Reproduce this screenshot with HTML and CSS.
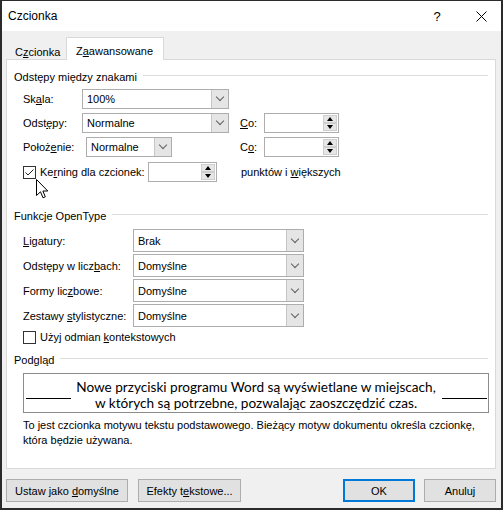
FILE: index.html
```html
<!DOCTYPE html>
<html lang="pl">
<head>
    <meta charset="UTF-8">
    <title>Czcionka</title>
    <link rel="stylesheet" href="styles.css">
</head>
<body>
    <div class="window">
        <div class="titlebar">
            <span class="title">Czcionka</span>
            <span class="help">?</span>
            <span class="close">
                <svg width="11" height="11" viewBox="0 0 11 11"><path d="M0.5 0.5 L10.5 10.5 M10.5 0.5 L0.5 10.5" stroke="#000" stroke-width="1"/></svg>
            </span>
        </div>
        <div class="tabs">
            <div class="tab">C<u>z</u>cionka</div>
            <div class="tab active">Z<u>a</u>awansowane</div>
        </div>
        <div class="panel">
            <div class="group-title">Odstępy między znakami</div>

            <div class="row r-skala">
                <span class="lbl w59">Sk<u>a</u>la:</span>
                <div class="combo w147"><span>100%</span><i class="arrow"></i></div>
            </div>
            <div class="row r-gap4">
                <span class="lbl w59">Odst<u>ę</u>py:</span>
                <div class="combo w147"><span>Normalne</span><i class="arrow"></i></div>
                <span class="lbl co"><u>C</u>o:</span>
                <div class="spin w75"><span class="val"></span><span class="btns"><i class="up"></i><i class="down"></i></span></div>
            </div>
            <div class="row r-gap4">
                <span class="lbl w63">Położ<u>e</u>nie:</span>
                <div class="combo w86"><span>Normalne</span><i class="arrow"></i></div>
                <span class="lbl co co-far">C<u>o</u>:</span>
                <div class="spin w75"><span class="val"></span><span class="btns"><i class="up"></i><i class="down"></i></span></div>
            </div>
            <div class="row r-kern">
                <span class="check on">
                    <svg width="11" height="11" viewBox="0 0 11 11"><path d="M1.5 5.5 L4 8 L9.5 2.5" fill="none" stroke="#222" stroke-width="1"/></svg>
                </span>
                <span class="lbl w108">Ke<u>r</u>ning dla czcionek:</span>
                <div class="spin w69"><span class="val"></span><span class="btns"><i class="up"></i><i class="down"></i></span></div>
                <span class="lbl after">punktów i <u>w</u>iększych</span>
            </div>

            <div class="group-title g2">Funkcje OpenType</div>

            <div class="row big first">
                <span class="lbl w110"><u>L</u>igatury:</span>
                <div class="combo w171"><span>Brak</span><i class="arrow"></i></div>
            </div>
            <div class="row big">
                <span class="lbl w110">Odstępy w licz<u>b</u>ach:</span>
                <div class="combo w171"><span>Domyślne</span><i class="arrow"></i></div>
            </div>
            <div class="row big">
                <span class="lbl w110">Formy lic<u>z</u>bowe:</span>
                <div class="combo w171"><span>Domyślne</span><i class="arrow"></i></div>
            </div>
            <div class="row big">
                <span class="lbl w110">Zestawy <u>s</u>tylistyczne:</span>
                <div class="combo w171"><span>Domyślne</span><i class="arrow"></i></div>
            </div>
            <div class="row r-ctx">
                <span class="check"></span>
                <span class="lbl">Użyj odmian <u>k</u>ontekstowych</span>
            </div>

            <div class="group-title g3">Podgląd</div>

            <div class="preview">
                <span class="rule"></span>
                <p class="sample">Nowe przyciski programu Word są wyświetlane w miejscach,<br>w których są potrzebne, pozwalając zaoszczędzić czas.</p>
                <span class="rule"></span>
            </div>
            <p class="desc">To jest czcionka motywu tekstu podstawowego. Bieżący motyw dokumentu określa czcionkę,<br>która będzie używana.</p>
        </div>
        <div class="footer">
            <button class="btn b-default">Ustaw jako <u>d</u>omyślne</button>
            <button class="btn b-effects">Efekty t<u>e</u>kstowe...</button>
            <button class="btn b-ok">OK</button>
            <button class="btn b-cancel">Anuluj</button>
        </div>

        <svg class="cursor" width="13" height="20" viewBox="0 0 13 20">
            <path d="M0.5 0.5 L0.5 16.5 L4.5 12.8 L7 18.8 L9.3 17.8 L6.9 12 L11.8 12 Z" fill="#fff" stroke="#000" stroke-width="1" stroke-linejoin="miter"/>
        </svg>
    </div>
</body>
</html>
```

FILE: styles.css
```css
*{margin: 0;padding: 0;box-sizing: border-box;}
html,body{
    width: 503px;
    height: 510px;
    background: #ffffff;
}
body{
    font-family: "Liberation Sans", Arial, sans-serif;
    font-size: 11px;
    color: #000000;
}
u{
    text-decoration: underline;
    text-underline-offset: 1px;
}

/* okno */
.window{
    position: relative;
    width: 503px;
    height: 510px;
    background: #f0f0f0;
    border: 2px solid #2b2b2b;
    border-top-width: 1px;
    display: flex;
    flex-direction: column;
}
.titlebar{
    height: 30px;
    background: #ffffff;
    display: flex;
    align-items: center;
    padding-left: 6px;
    font-size: 12px;
}
.title{
    flex-grow: 1;
}
.help{
    width: 30px;
    text-align: center;
    font-size: 13px;
    margin-right: 9px;
}
.close{
    width: 40px;
    display: flex;
    justify-content: center;
}

/* zakladki */
.tabs{
    height: 28px;
    display: flex;
    align-items: flex-end;
    padding-left: 4px;
}
.tab{
    height: 19px;
    width: 60px;
    padding: 4px 0 0 9px;
    line-height: 16px;
}
.tab.active{
    position: relative;
    z-index: 1;
    width: 98px;
    height: 23px;
    margin-bottom: -1px;
    padding: 5px 0 0 9px;
    background: #ffffff;
    border: 1px solid #d9d9d9;
    border-bottom: none;
}

/* panel */
.panel{
    margin-left: 4px;
    width: 490px;
    height: 410px;
    background: #ffffff;
    border: 1px solid #d9d9d9;
    padding: 9px 7px 0 7px;
}
.group-title{
    height: 16px;
    display: flex;
    align-items: center;
    line-height: 16px;
}
.group-title::after{
    content: "";
    flex-grow: 1;
    height: 1px;
    margin: 0 0 4px 6px;
    background: #dcdcdc;
}
.g2{margin-top: 26px;}
.g3{margin-top: 7px;}

.row{
    display: flex;
    align-items: center;
    height: 20px;
    margin-left: 9px;
}
.r-skala{margin-top: 4px;}
.r-gap4{margin-top: 4px;}
.r-kern{margin-top: 5px;}
.row.big{height: 23px;margin-top: 2px;}
.row.big.first{margin-top: 5px;}
.r-ctx{height: 16px;margin-top: 2px;}

.lbl{white-space: nowrap;}
.w59{width: 59px;}
.w63{width: 63px;}
.w108{width: 108px;}
.w110{width: 110px;}
.co{width: 24px;margin-left: 11px;}
.co-far{margin-left: 68px;}
.after{margin-left: 24px;}
.r-ctx .lbl{margin-left: 4px;}

/* lista rozwijana */
.combo{
    height: 100%;
    display: flex;
    align-items: center;
    border: 1px solid #adadad;
    background: #ffffff;
    padding-left: 4px;
}
.combo span{flex-grow: 1;}
.w147{width: 147px;}
.w86{width: 86px;}
.w171{width: 171px;}
.arrow{
    width: 17px;
    height: 100%;
    display: flex;
    justify-content: center;
    align-items: center;
    background: #e5e5e5;
    border-left: 1px solid #c6c6c6;
}
.arrow::after{
    content: "";
    width: 5px;
    height: 5px;
    margin-top: -4px;
    border-right: 1px solid #606060;
    border-bottom: 1px solid #606060;
    transform: rotate(45deg);
}

/* pole liczbowe */
.spin{
    height: 100%;
    display: flex;
    border: 1px solid #adadad;
    background: #ffffff;
}
.w75{width: 75px;}
.w69{width: 69px;}
.spin .val{flex-grow: 1;}
.btns{
    width: 16px;
    display: flex;
    flex-direction: column;
    padding: 1px;
}
.btns i{
    flex-grow: 1;
    display: flex;
    justify-content: center;
    align-items: center;
    background: #e6e6e6;
    border: 1px solid #cfcfcf;
}
.btns .up::after{
    content: "";
    border-left: 3px solid transparent;
    border-right: 3px solid transparent;
    border-bottom: 4px solid #000000;
}
.btns .down::after{
    content: "";
    border-left: 3px solid transparent;
    border-right: 3px solid transparent;
    border-top: 4px solid #000000;
}

/* pole wyboru */
.check{
    width: 13px;
    height: 13px;
    border: 1px solid #333333;
    background: #ffffff;
    display: flex;
    justify-content: center;
    align-items: center;
}
.r-kern .check{margin-right: 4px;}

/* podglad */
.preview{
    margin: 5px 0 0 9px;
    width: 466px;
    height: 40px;
    border: 1px solid #8c8c8c;
    display: flex;
    align-items: center;
}
.rule{
    flex-grow: 1;
    height: 1px;
    margin: 10px 1px 0 2px;
    background: #000000;
}
.sample{
    padding: 4px 4px 0 4px;
    font-family: Lato, "Liberation Sans", sans-serif;
    font-size: 13.6px;
    line-height: 16px;
    text-align: center;
    white-space: nowrap;
}
.desc{
    margin: 5px 0 0 9px;
    line-height: 15px;
    white-space: nowrap;
}

/* przyciski */
.footer{
    display: flex;
    margin-top: 10px;
    padding: 0 5px 0 4px;
}
.btn{
    height: 23px;
    font-family: "Liberation Sans", Arial, sans-serif;
    font-size: 11px;
    color: #000000;
    background: #e1e1e1;
    border: 1px solid #adadad;
}
.b-default{width: 122px;}
.b-effects{width: 103px;margin-left: 10px;}
.b-ok{width: 72px;margin-left: auto;border: 2px solid #0078d7;}
.b-cancel{width: 72px;margin-left: 9px;}

.cursor{
    position: absolute;
    left: 34px;
    top: 178px;
}
```
